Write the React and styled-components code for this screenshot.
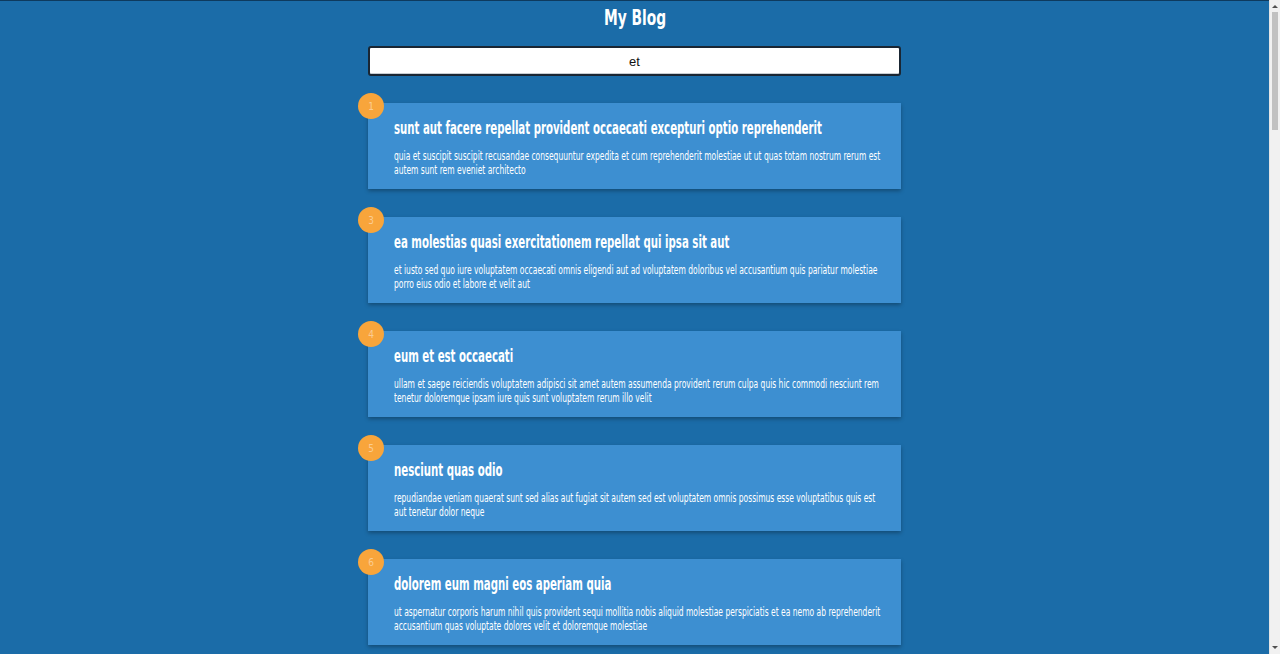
import React from 'react'
import styled, { createGlobalStyle } from 'styled-components'

const posts = [
  { id: 1, title: 'sunt aut facere repellat provident occaecati excepturi optio reprehenderit', body: 'quia et suscipit suscipit recusandae consequuntur expedita et cum reprehenderit molestiae ut ut quas totam nostrum rerum est autem sunt rem eveniet architecto' },
  { id: 3, title: 'ea molestias quasi exercitationem repellat qui ipsa sit aut', body: 'et iusto sed quo iure voluptatem occaecati omnis eligendi aut ad voluptatem doloribus vel accusantium quis pariatur molestiae porro eius odio et labore et velit aut' },
  { id: 4, title: 'eum et est occaecati', body: 'ullam et saepe reiciendis voluptatem adipisci sit amet autem assumenda provident rerum culpa quis hic commodi nesciunt rem tenetur doloremque ipsam iure quis sunt voluptatem rerum illo velit' },
  { id: 5, title: 'nesciunt quas odio', body: 'repudiandae veniam quaerat sunt sed alias aut fugiat sit autem sed est voluptatem omnis possimus esse voluptatibus quis est aut tenetur dolor neque' },
  { id: 6, title: 'dolorem eum magni eos aperiam quia', body: 'ut aspernatur corporis harum nihil quis provident sequi mollitia nobis aliquid molestiae perspiciatis et ea nemo ab reprehenderit accusantium quas voluptate dolores velit et doloremque molestiae' },
  { id: 7, title: 'magnam facilis autem', body: 'dolore placeat quibusdam ea quo vitae magni quis enim qui quis quo nemo aut saepe quidem repellat excepturi ut quia sunt ut sequi eos ea sed quas' },
  { id: 8, title: 'dolorem dolore est ipsam', body: 'dignissimos aperiam dolorem qui eum facilis quibusdam animi sint suscipit qui sint possimus cum quaerat magni maiores excepturi ipsam ut commodi dolor voluptatum modi aut vitae' },
]

const GlobalStyle = createGlobalStyle`
  body {
    margin: 0;
    background: #1b6ca8;
    font-family: "DejaVu Sans Condensed", "DejaVu Sans", sans-serif;
    color: #fff;
    overflow: hidden;
  }
`

const Window = styled.div`
  display: flex;
  height: 100vh;
`

const Viewport = styled.div`
  flex: 1;
  min-width: 0;
  box-sizing: border-box;
  border-top: 1px solid #0e3a5e;
  overflow: hidden;
`

const Scrollbar = styled.div`
  width: 10px;
  display: flex;
  flex-direction: column;
  align-items: center;
  background: #f1f1f1;
  border-left: 1px solid #e4e4e4;
`

const Arrow = styled.div`
  width: 0;
  height: 0;
  margin: ${p => (p.$down ? '0 0 5px' : '5px 0 0')};
  border-left: 3px solid transparent;
  border-right: 3px solid transparent;
  ${p => (p.$down ? 'border-top: 3px solid #505050;' : 'border-bottom: 3px solid #505050;')}
`

const Track = styled.div`
  flex: 1;
  align-self: stretch;
  padding: 4px 2px;
`

const Thumb = styled.div`
  height: 118px;
  background: #c1c1c1;
`

const Page = styled.div`
  display: flex;
  flex-direction: column;
  align-items: center;
  padding-bottom: 40px;
`

/* condensed look: the text is drawn wider and squeezed back */
const Squeeze = styled.div`
  width: ${p => 100 / p.$k}%;
  transform: scaleX(${p => p.$k});
  transform-origin: left top;
`

const Title = styled.h1`
  margin: 2px 0 0;
  width: 100px;
  text-align: center;
  font-size: 21px;
  line-height: 30px;
  font-weight: 700;
  white-space: nowrap;
`

const Search = styled.input`
  box-sizing: border-box;
  width: 533px;
  height: 30px;
  margin-top: 13px;
  border: 2px solid #1a2633;
  border-radius: 3px;
  box-shadow: inset 0 -1px 0 #c8cdd2;
  background: #fff;
  text-align: center;
  font-family: "Liberation Sans", Arial, sans-serif;
  font-size: 13px;
  color: #111;
  outline: none;
`

const List = styled.div`
  display: flex;
  flex-direction: column;
  gap: 28px;
  margin-top: 27px;
  width: 533px;
`

const Card = styled.div`
  position: relative;
  background: #3d8fd1;
  padding: 14px 14px 12px 26px;
  min-height: 86px;
  box-sizing: border-box;
  box-shadow: 0 2px 4px rgba(0, 0, 0, 0.3);
`

const Badge = styled.div`
  position: absolute;
  top: -10px;
  left: -10px;
  width: 26px;
  height: 26px;
  border-radius: 50%;
  background: #f8a53b;
  display: flex;
  align-items: center;
  justify-content: center;
  font-size: 10px;
  color: rgba(255, 255, 255, 0.45);
`

const PostTitle = styled.h2`
  margin: 0;
  font-size: 17px;
  line-height: 22px;
  font-weight: 700;
`

const PostBody = styled.p`
  margin: 11px 0 0;
  font-size: 12px;
  line-height: 13.5px;
`

export default function App() {
  return (
    <>
      <GlobalStyle />
      <Window>
        <Viewport>
          <Page>
            <Title>
              <Squeeze $k={0.73}>My Blog</Squeeze>
            </Title>
            <Search defaultValue="et" />
            <List>
              {posts.map(p => (
                <Card key={p.id}>
                  <Badge>{p.id}</Badge>
                  <PostTitle>
                    <Squeeze $k={0.666}>{p.title}</Squeeze>
                  </PostTitle>
                  <PostBody>
                    <Squeeze $k={0.70}>{p.body}</Squeeze>
                  </PostBody>
                </Card>
              ))}
            </List>
          </Page>
        </Viewport>
        <Scrollbar>
          <Arrow />
          <Track>
            <Thumb />
          </Track>
          <Arrow $down />
        </Scrollbar>
      </Window>
    </>
  )
}
